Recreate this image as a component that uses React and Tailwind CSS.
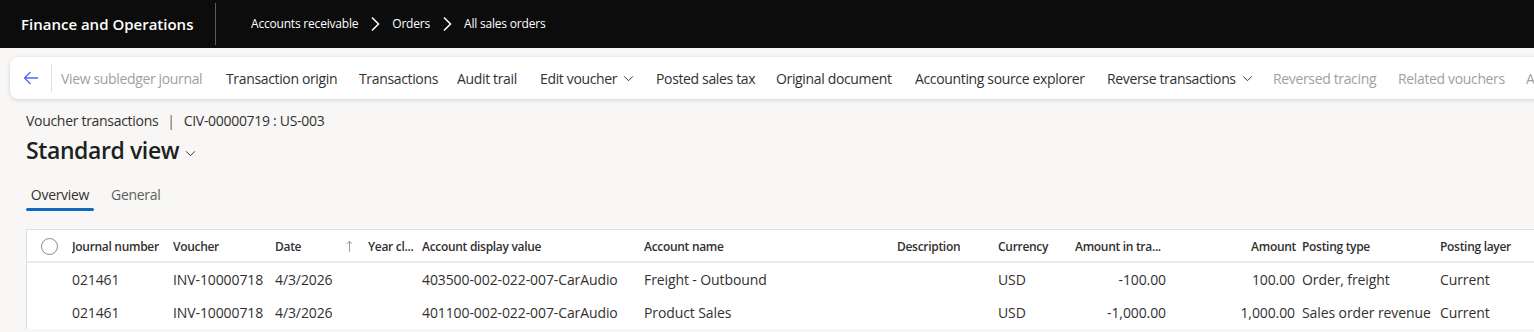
import React from 'react';

const font = { fontFamily: '"Open Sans", "Noto Sans", sans-serif' };

const actions = [
  { label: 'View subledger journal', w: 'w-[165px]', off: true },
  { label: 'Transaction origin', w: 'w-[133px]' },
  { label: 'Transactions', w: 'w-[98px]' },
  { label: 'Audit trail', w: 'w-[83px]' },
  { label: 'Edit voucher', w: 'w-[116px]', menu: true },
  { label: 'Posted sales tax', w: 'w-[120px]' },
  { label: 'Original document', w: 'w-[139px]' },
  { label: 'Accounting source explorer', w: 'w-[192px]' },
  { label: 'Reverse transactions', w: 'w-[166px]', menu: true },
  { label: 'Reversed tracing', w: 'w-[125px]', off: true },
  { label: 'Related vouchers', w: 'w-[128px]', off: true },
  { label: 'Audit', w: 'w-[80px]', off: true },
];

const cols = [
  { key: 'journal', label: 'Journal number', w: 'w-[101px]' },
  { key: 'voucher', label: 'Voucher', w: 'w-[102px]' },
  { key: 'date', label: 'Date', w: 'w-[71px]' },
  { key: 'sort', label: '', w: 'w-[22px]' },
  { key: 'year', label: 'Year cl...', w: 'w-[54px]' },
  { key: 'account', label: 'Account display value', w: 'w-[222px]' },
  { key: 'name', label: 'Account name', w: 'w-[253px]' },
  { key: 'desc', label: 'Description', w: 'w-[101px]' },
  { key: 'cur', label: 'Currency', w: 'w-[77px]' },
  { key: 'amtTr', label: 'Amount in tra...', w: 'w-[98px]', num: true },
  { key: 'amt', label: 'Amount', w: 'w-[129px]', num: true, right: true },
  { key: 'ptype', label: 'Posting type', w: 'w-[138px]' },
  { key: 'layer', label: 'Posting layer', w: 'w-[100px]' },
];

const rows = [
  {
    journal: '021461', voucher: 'INV-10000718', date: '4/3/2026', sort: '', year: '',
    account: '403500-002-022-007-CarAudio', name: 'Freight - Outbound', desc: '',
    cur: 'USD', amtTr: '-100.00', amt: '100.00', ptype: 'Order, freight', layer: 'Current',
  },
  {
    journal: '021461', voucher: 'INV-10000718', date: '4/3/2026', sort: '', year: '',
    account: '401100-002-022-007-CarAudio', name: 'Product Sales', desc: '',
    cur: 'USD', amtTr: '-1,000.00', amt: '1,000.00', ptype: 'Sales order revenue', layer: 'Current',
  },
];

const Chevron = ({ className }) => (
  <svg viewBox="0 0 10 16" className={className} fill="none" stroke="currentColor" strokeWidth="1.5">
    <path d="M2 1.5 L8.5 8 L2 14.5" />
  </svg>
);

const ChevronDown = ({ className }) => (
  <svg viewBox="0 0 12 8" className={className} fill="none" stroke="currentColor" strokeWidth="1.1">
    <path d="M1 1.5 L6 6.5 L11 1.5" />
  </svg>
);

export default function App() {
  return (
    <div style={font} className="w-[1534px] h-[332px] overflow-hidden bg-[#f8f7f6] text-[#323130]">
      {/* Top bar */}
      <div className="h-[48px] bg-[#0c0c0c] flex items-center">
        <div className="pl-[21px] w-[215px] shrink-0 text-white text-[15px] font-semibold tracking-[0px]">
          Finance and Operations
        </div>
        <div className="w-px h-[42px] shrink-0 bg-[#5c5c5c]" />
        <div className="flex items-center pl-[35px] text-white text-[12px] tracking-[-0.2px]">
          <span>Accounts receivable</span>
          <Chevron className="w-[10px] h-[16px] mx-[12px] text-white" />
          <span>Orders</span>
          <Chevron className="w-[10px] h-[16px] mx-[12px] text-white" />
          <span>All sales orders</span>
        </div>
      </div>

      {/* Action pane */}
      <div className="ml-[10px] mt-[9px] h-[42px] w-[1560px] bg-white rounded-[8px] shadow-[0_1px_4px_rgba(0,0,0,0.16)] flex items-center">
        <div className="w-[41px] shrink-0 flex justify-center text-[#4f6bed]">
          <svg viewBox="0 0 16 16" className="w-[16px] h-[16px]" fill="none" stroke="currentColor" strokeWidth="1.3">
            <path d="M15 8 H1.5 M7.5 2 L1.5 8 L7.5 14" />
          </svg>
        </div>
        <div className="w-px h-[28px] shrink-0 bg-[#e1dfdd] mr-[9px]" />
        {actions.map((a) => (
          <div key={a.label} className={`${a.w} shrink-0 flex items-center text-[14px] tracking-[-0.35px] whitespace-nowrap ${a.off ? 'text-[#a19f9d]' : 'text-[#323130]'}`}>
            <span>{a.label}</span>
            {a.menu && <ChevronDown className="w-[11px] h-[7px] ml-[6px]" />}
          </div>
        ))}
      </div>

      {/* Title area */}
      <div className="pl-[26px] pt-[11px] text-[14px] tracking-[-0.3px] flex items-center h-[21px] box-content">
        <span>Voucher transactions</span>
        <span className="mx-[9px] text-[#605e5c]">|</span>
        <span>CIV-00000719 : US-003</span>
      </div>
      <div className="pl-[26px] mt-[4px] flex items-center h-[30px]">
        <span className="text-[23px] font-semibold tracking-[-0.4px] text-[#201f1e]">Standard view</span>
        <ChevronDown className="w-[11px] h-[7px] ml-[6px] mt-[6px] text-[#323130]" />
      </div>

      {/* Tabs */}
      <div className="pl-[26px] mt-[18px] flex text-[14px] tracking-[-0.3px]">
        <div className="w-[68px] flex flex-col items-center">
          <span className="h-[24px] leading-[24px]">Overview</span>
          <div className="h-[3px] w-full bg-[#0f6cbd] rounded-full mt-[1px]" />
        </div>
        <div className="ml-[17px] h-[24px] leading-[24px] text-[#605e5c]">General</div>
      </div>

      {/* Grid */}
      <div className="ml-[26px] mt-[18px] bg-white border-t border-l border-[#e1dfdd] tracking-[-0.1px]">
        <div className="flex items-center h-[33px] pt-[2px] border-b-2 border-[#edebe9] font-semibold text-[12px] tracking-[-0.3px]">
          <div className="w-[45px] shrink-0 flex justify-center">
            <div className="w-[17px] h-[17px] rounded-full border border-[#8a8886]" />
          </div>
          {cols.map((c) => (
            <div key={c.key} className={`${c.w} shrink-0 whitespace-nowrap overflow-hidden ${c.right ? 'text-right pr-[6px]' : ''}`}>
              {c.key === 'sort' ? (
                <svg viewBox="0 0 8 14" className="w-[7px] h-[13px] text-[#8a8886]" fill="none" stroke="currentColor" strokeWidth="1">
                  <path d="M4 13 V1 M1 4 L4 1 L7 4" />
                </svg>
              ) : (
                c.label
              )}
            </div>
          ))}
        </div>
        {rows.map((r, i) => (
          <div key={i} className="flex items-center h-[33px] text-[14px]">
            <div className="w-[45px] shrink-0" />
            {cols.map((c) => (
              <div key={c.key} className={`${c.w} shrink-0 whitespace-nowrap overflow-hidden ${c.num ? 'text-right pr-[7px]' : ''}`}>
                {r[c.key]}
              </div>
            ))}
          </div>
        ))}
      </div>
    </div>
  );
}
